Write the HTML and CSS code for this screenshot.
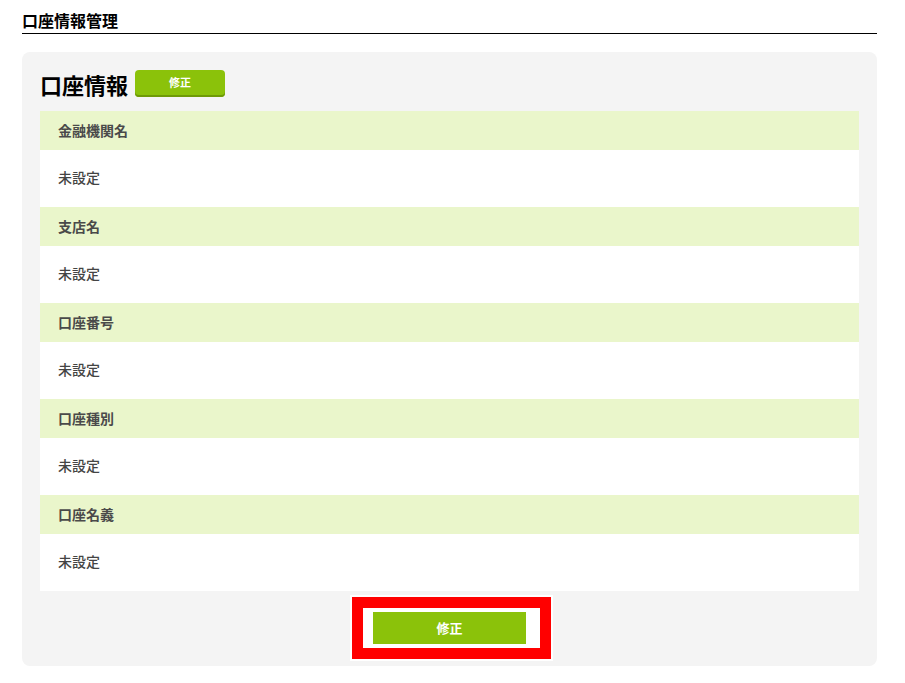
FILE: index.html
```html
<!DOCTYPE html>
<html lang="ja">
<head>
<meta charset="utf-8">
<title>口座情報管理</title>
<link rel="stylesheet" href="styles.css">
</head>
<body>
<div class="page">
  <h1 class="page-title">口座情報管理</h1>

  <section class="card">
    <div class="card-head">
      <h2 class="card-title">口座情報</h2>
      <button class="btn-small" type="button">修正</button>
    </div>

    <dl class="info">
      <dt class="info-label">金融機関名</dt>
      <dd class="info-value">未設定</dd>
      <dt class="info-label">支店名</dt>
      <dd class="info-value">未設定</dd>
      <dt class="info-label">口座番号</dt>
      <dd class="info-value">未設定</dd>
      <dt class="info-label">口座種別</dt>
      <dd class="info-value">未設定</dd>
      <dt class="info-label">口座名義</dt>
      <dd class="info-value">未設定</dd>
    </dl>

    <div class="actions">
      <div class="btn-wrap">
        <span class="highlight"></span>
        <button class="btn-main" type="button">修正</button>
      </div>
    </div>
  </section>
</div>
</body>
</html>
```

FILE: styles.css
```css
html, body {
  margin: 0;
  padding: 0;
  background: #ffffff;
}

body {
  font-family: "Noto Sans CJK JP", "Noto Sans", sans-serif;
  color: #222;
}

.page {
  width: 855px;
  padding: 8px 0 0 22px;
}

.page-title {
  margin: 0;
  font-size: 16px;
  line-height: 24px;
  font-weight: bold;
  color: #000;
  padding-bottom: 1px;
  border-bottom: 1px solid #000;
}

.card {
  margin-top: 18px;
  background: #f4f4f4;
  border-radius: 8px;
  padding: 18px 18px 22px;
}

.card-head {
  display: flex;
  align-items: center;
  gap: 7px;
  height: 27px;
  margin-bottom: 14px;
}

.card-title {
  margin: 0;
  font-size: 22px;
  line-height: 27px;
  font-weight: bold;
  color: #000;
  padding-top: 1px;
}

.btn-small {
  width: 90px;
  height: 27px;
  margin: 0;
  padding: 0 0 2px;
  border: none;
  border-radius: 4px;
  background: #8bc20a;
  box-shadow: inset 0 -2px 0 #6e9a06;
  color: #fff;
  font-family: inherit;
  font-size: 11px;
  font-weight: bold;
  line-height: 25px;
  cursor: pointer;
}

.info {
  margin: 0;
  background: #fff;
}

.info-label {
  height: 38px;
  line-height: 38px;
  padding: 0 0 1px 18px;
  background: #eaf6cb;
  font-size: 14px;
  font-weight: bold;
  color: #4a4a4a;
}

.info-value {
  margin: 0;
  height: 55px;
  line-height: 55px;
  padding: 0 0 2px 18px;
  background: #fff;
  font-size: 14px;
  font-weight: 500;
  color: #444;
}

.actions {
  display: flex;
  justify-content: center;
  margin-top: 21px;
}

.btn-wrap {
  position: relative;
}

/* red call-out frame drawn around the main button */
.highlight {
  position: absolute;
  left: -21px;
  right: -25px;
  top: -15px;
  bottom: -15px;
  border: 11px solid #ff0000;
  background: #fff;
  box-shadow: 0 0 0 2px #fff;
  z-index: 0;
}

.btn-main {
  position: relative;
  z-index: 1;
  display: block;
  width: 153px;
  height: 32px;
  margin: 0;
  padding: 0 0 1px;
  border: none;
  background: #8bc20a;
  color: #fff;
  font-family: inherit;
  font-size: 13px;
  font-weight: bold;
  cursor: pointer;
}
```
